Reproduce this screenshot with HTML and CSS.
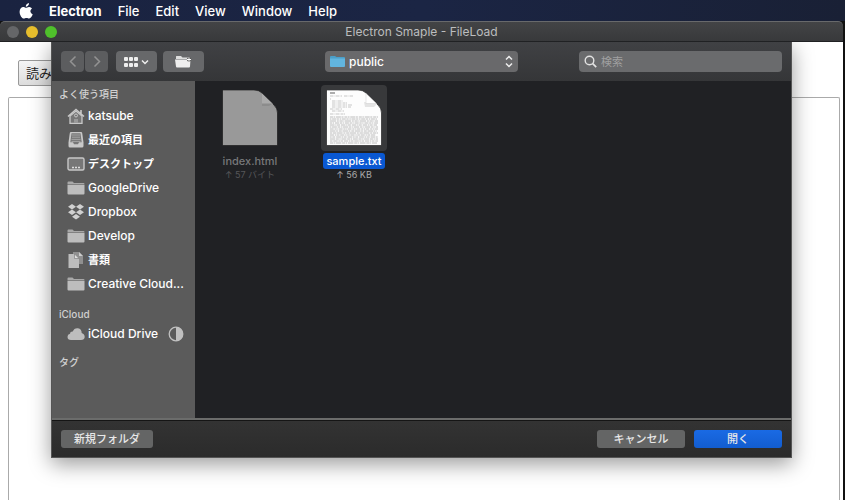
FILE: index.html
```html
<!DOCTYPE html>
<html lang="ja">
<head>
<meta charset="utf-8">
<title>Electron Smaple - FileLoad</title>
<link rel="stylesheet" href="styles.css">
</head>
<body>
<svg class="defs" aria-hidden="true">
  <symbol id="folder" viewBox="0 0 18 15">
    <path fill="#a8a8a8" d="M0.500 4V2q0-1 1-1h4l1.500 1.500H16.500q1 0 1 1V4z"/>
    <path fill="#bdbdbd" d="M0.500 4.500h17V13q0 1-1 1h-15q-1 0-1-1z"/>
  </symbol>
</svg>
<nav class="menubar" aria-label="メニューバー">
  <button class="menu" aria-label="Apple">
    <svg width="14" height="16" viewBox="0 0 14 16"><path fill="#fff" d="M10 0c.2 2-1.400 3.700-3.200 3.700C6.600 1.900 8.200.2 10 0zM7 4.800c.7 0 1.700-.9 3.200-.8 1.200.1 2.200.6 2.800 1.500-2.400 1.500-2 4.700.7 5.700-.6 1.700-2 4.300-3.500 4.300-1 0-1.500-.6-2.700-.6s-1.800.6-2.700.6C2.900 15.500.6 12 .6 8.700c0-3 1.900-4.600 3.700-4.700C5.500 4 6.300 4.800 7 4.800z"/></svg>
  </button>
  <button class="menu app">Electron</button>
  <button class="menu">File</button>
  <button class="menu">Edit</button>
  <button class="menu">View</button>
  <button class="menu">Window</button>
  <button class="menu">Help</button>
</nav>
<div class="window">
  <header class="titlebar">
    <div class="lights"><button class="light" aria-label="閉じる"></button><button class="light yellow" aria-label="しまう"></button><button class="light green" aria-label="拡大"></button></div>
    <h1>Electron Smaple - FileLoad</h1>
  </header>
  <main class="page">
    <button class="load">読み込む</button>
    <div class="output"></div>
    <section class="dialog" role="dialog" aria-label="開く">
      <div class="toolbar">
        <div class="tools">
          <div class="pair">
            <button class="tool" aria-label="戻る"><svg width="8" height="13" viewBox="0 0 8 13"><path class="dim" d="M6.500 1.500l-5 5 5 5"/></svg></button>
            <button class="tool" aria-label="進む"><svg width="8" height="13" viewBox="0 0 8 13"><path class="dim" d="M1.500 1.500l5 5-5 5"/></svg></button>
          </div>
          <button class="tool wide" aria-label="表示">
            <svg width="25" height="12" viewBox="0 0 25 12"><g fill="#eee"><rect x="0" y="1" width="4" height="4" rx="1"/><rect x="5" y="1" width="4" height="4" rx="1"/><rect x="10" y="1" width="4" height="4" rx="1"/><rect x="0" y="7" width="4" height="4" rx="1"/><rect x="5" y="7" width="4" height="4" rx="1"/><rect x="10" y="7" width="4" height="4" rx="1"/></g><path d="M18 4.500l3 3 3-3" fill="none" stroke="#eee" stroke-width="1.500"/></svg>
          </button>
          <button class="tool wide" aria-label="新規フォルダ">
            <svg width="17" height="13" viewBox="0 0 17 13"><path fill="#ddd" d="M1 4V1.500Q1 1 1.500 1H6l1.500 1.500H14V4z"/><path fill="#eee" d="M0 4.500h15.500l-.5 7q0 1-1 1H2q-1 0-1-1z"/><path d="M14 2.500v4M12 4.500h4" stroke="#555" stroke-width="2.500"/><path d="M14 2.500v4M12 4.500h4" stroke="#fff"/></svg>
          </button>
        </div>
        <div class="location">
          <svg width="15" height="12" viewBox="0 0 15 12"><path fill="#4b9fc9" d="M0 3V1q0-1 1-1h4l1.500 1H14q1 0 1 1v2z"/><path fill="#62b5df" d="M0 2.500h15V10q0 1-1 1H1q-1 0-1-1z"/></svg>
          <select aria-label="場所"><option>public</option></select>
          <svg width="8" height="13" viewBox="0 0 8 13"><path d="M1 4.500l3-3 3 3M1 8.500l3 3 3-3" fill="none" stroke="#eee" stroke-width="1.500"/></svg>
        </div>
        <label class="search">
          <svg width="13" height="13" viewBox="0 0 13 13"><circle cx="5.500" cy="5.500" r="4.300" fill="none" stroke="#e2e2e2" stroke-width="1.400"/><path d="M8.700 8.700l3.500 3.500" stroke="#e2e2e2" stroke-width="1.700"/></svg>
          <input type="search" placeholder="検索" aria-label="検索">
        </label>
      </div>
      <div class="body">
        <nav class="sidebar" aria-label="サイドバー">
          <h2>よく使う項目</h2>
          <ul>
            <li><a href="#"><svg viewBox="0 0 18 16"><path d="M3 8v7.300h12V8L9 3z" fill="#777" stroke="#c8c8c8" stroke-width="1.300"/><path d="M1 8.500l8-7 8 7M14 2v4" fill="none" stroke="#c8c8c8" stroke-width="1.600"/><path d="M7 15v-4h4v4z" fill="#999"/><circle cx="9" cy="7.500" r="1.500" fill="none" stroke="#c8c8c8"/></svg>katsube</a></li>
            <li><a href="#" class="ja"><svg viewBox="0 0 18 16"><path d="M4 0h10q1 0 1.200 1L16.500 10.500V14q0 1.500-1.500 1.500H3Q1.500 15.500 1.500 14v-3.500L2.800 1q.2-1 1.200-1z" fill="#c8c8c8"/><path d="M4.500 1.300h9l1.200 9H12l-1 2H7l-1-2H3.300z" fill="#777"/><path d="M5 3h8M5 5.200h8M4.500 7.400h9M4.500 9.400h9" stroke="#a4a4a4"/></svg>最近の項目</a></li>
            <li><a href="#" class="ja"><svg viewBox="0 0 18 16"><rect x="1" y="2" width="16" height="12" rx="1.500" fill="#777" stroke="#c8c8c8" stroke-width="1.400"/><path d="M5 11.500h2M8 11.500h2M11 11.500h2" stroke="#ddd" stroke-width="1.500"/></svg>デスクトップ</a></li>
            <li><a href="#"><svg viewBox="0 0 18 15"><use href="#folder"/></svg>GoogleDrive</a></li>
            <li><a href="#"><svg viewBox="0 0 18 16"><path fill="#d0d0d0" d="M5 0l4 2.700-4 2.700-4-2.700zM13 0l4 2.700-4 2.700-4-2.700zM5 5.500l4 2.700-4 2.700-4-2.700zM13 5.500l4 2.700-4 2.700-4-2.700zM9 10l4 2.700-4 2.700-4-2.700z"/></svg>Dropbox</a></li>
            <li><a href="#"><svg viewBox="0 0 18 15"><use href="#folder"/></svg>Develop</a></li>
            <li><a href="#" class="ja"><svg viewBox="0 0 18 16"><path fill="#909090" d="M6 0h6l4 4v8H6z"/><path fill="#ccc" d="M12 0l4 4h-4z"/><path fill="#bdbdbd" d="M1.500 2h6l4.500 4.500V16H1.500z"/><path fill="#e0e0e0" stroke="#777" stroke-width=".6" d="M7.500 2l4.500 4.500H7.500z"/></svg>書類</a></li>
            <li><a href="#"><svg viewBox="0 0 18 15"><use href="#folder"/></svg>Creative Cloud...</a></li>
          </ul>
          <h2>iCloud</h2>
          <ul>
            <li><a href="#"><svg viewBox="0 0 18 16"><path fill="#bdbdbd" d="M4 14Q.5 14 .5 10.800.5 8.500 3 7.800 3 5.500 5.700 5.600 7.200 1.800 11 2.300q3.700.7 3.700 4.700Q17.700 8 17.700 11q-.2 3-3.700 3z"/></svg>iCloud Drive</a><svg class="progress" viewBox="0 0 16 16"><circle cx="8" cy="8" r="6.800" fill="none" stroke="#c0c0c0" stroke-width="1.300"/><path fill="#c0c0c0" d="M8 1a7 7 0 0 1 0 14z"/></svg></li>
          </ul>
          <h2>タグ</h2>
        </nav>
        <div class="files">
          <button class="file off" disabled>
            <span class="thumb"><svg width="56" height="56" viewBox="0 0 56 56"><path fill="#999" stroke="#111" stroke-width=".6" d="M.5 0H32q5 0 8 3l12 12q3.500 3.500 3.500 8v32.500H.5z"/><path fill="#8c8c8c" d="M40 13h11l-4 3h-7z"/><path fill="#aaa" d="M40 3.500L50.500 13.500H40z"/></svg></span>
            <span class="name">index.html</span>
            <span class="size">↑ 57 バイト</span>
          </button>
          <button class="file selected">
            <span class="thumb"><svg width="56" height="56" viewBox="0 0 56 56"><path fill="#fdfdfd" stroke="#111" stroke-width=".6" d="M.5 0H32q5 0 8 3l12 12q3.500 3.500 3.500 8v32.500H.5z"/><g stroke="#777" stroke-width=".8" fill="none"><path d="M4 3h5" stroke-width="1.200"/><path d="M4 6h12m2 0h9M4 9h1M6 11h11M6 13h15M6 15h20M6 17h19M4 19h12M6 21h12M4 24h15" stroke-dasharray="3 .5 1 1 4 1" opacity=".5"/><g opacity=".6"><path d="M4 27h48" stroke-dasharray="3 .6 1.500 .8 5 .6 2 .9"/><path d="M4 29h47" stroke-dasharray="1.400 .7 4 .6 2.200 .8"/><path d="M4 31h48" stroke-dasharray="6 .8 2 .7 3.300 .6 1 .6"/><path d="M4 33h48" stroke-dasharray="2.300 .6 1.200 .9 4.100 .7"/><path d="M4 35h47" stroke-dasharray="4.600 .7 1 .5 3.200 .9"/><path d="M4 37h48" stroke-dasharray="1 .6 5.300 .7 2.700 .8"/><path d="M4 39h48" stroke-dasharray="3.700 .8 2.200 .6 1 .6"/><path d="M4 41h47" stroke-dasharray="5.500 .6 1.800 .9 3 .7"/><path d="M4 43h48" stroke-dasharray="2 .7 3.400 .5 6 .8"/><path d="M4 45h46" stroke-dasharray="4.200 .8 1.300 .6 2.600 .7"/><path d="M4 47h48" stroke-dasharray="1.700 .6 2.900 .9 4.800 .6"/><path d="M4 49h48" stroke-dasharray="5 .7 3.100 .6 1.200 .8"/><path d="M4 51h48" stroke-dasharray="2.500 .8 4.400 .7 1.500 .6"/><path d="M4 53h47" stroke-dasharray="3.300 .6 1 .8 5.700 .7"/></g></g><path fill="#e4e4e4" d="M38 12l13 2-3 3h-9z"/><path fill="#fff" stroke="#ccc" stroke-width=".5" d="M40 3.500L50.500 13.500H40z"/></svg></span>
            <span class="name">sample.txt</span>
            <span class="size">↑ 56 KB</span>
          </button>
        </div>
      </div>
      <footer class="actions">
        <button class="push">新規フォルダ</button>
        <span class="spacer"></span>
        <button class="push">キャンセル</button>
        <button class="push primary">開く</button>
      </footer>
    </section>
  </main>
</div>
</body>
</html>
```
FILE: styles.css
```css
* { box-sizing: border-box; }
body {
  margin: 0;
  height: 100vh;
  overflow: hidden;
  display: flex;
  flex-direction: column;
  background: #111;
  color: #fff;
  font: 12px/16px Inter, "Noto Sans CJK JP", sans-serif;
}
button, input, select { font: inherit; color: inherit; border: 0; margin: 0; padding: 0; background: none; }
svg { display: block; flex: none; }
.defs { position: absolute; width: 0; height: 0; }
h1, h2, ul { margin: 0; padding: 0; list-style: none; }

.menubar {
  flex: none;
  display: flex;
  align-items: center;
  gap: 16px;
  height: 21px;
  padding-left: 19px;
  background: linear-gradient(90deg, #1a2340, #1b2544 50%, #192035);
}
.menu { font-size: 13px; font-weight: 500; white-space: nowrap; }
.app { font-weight: 700; }

.window { flex: 1; min-height: 0; display: flex; flex-direction: column; margin-right: 2px; }
.titlebar {
  flex: none;
  display: grid;
  grid-template-columns: 1fr auto 1fr;
  align-items: center;
  height: 21px;
  padding: 0 7px;
  border-top: 1px solid #68696b;
  border-bottom: 1px solid #202123;
  border-radius: 5px 5px 0 0;
  background: linear-gradient(#434446, #38393b);
}
.lights { display: flex; gap: 7px; }
.light { width: 12px; height: 12px; border-radius: 50%; background: #656668; }
.yellow { background: #e6bd2c; }
.green { background: #4fc02b; }
h1 { font-size: 12px; font-weight: 400; color: #bcbdbe; }

.page { position: relative; flex: 1; min-height: 0; display: flex; flex-direction: column; align-items: flex-start; gap: 11px; padding: 18px 3px 0 8px; background: #fff; overflow: hidden; }
.load { flex: none; height: 26px; margin-left: 10px; padding: 0 7px; border: 1px solid #999; border-radius: 2px; background: linear-gradient(#f5f5f5, #ddd); color: #222; font-size: 13px; }
.output { flex: 1; align-self: stretch; border: 1px solid #aaa; border-bottom: 0; border-radius: 2px 2px 0 0; }

.dialog {
  position: absolute;
  inset: 0 51px 42px;
  display: flex;
  flex-direction: column;
  border: 1px solid #555;
  border-top: 0;
  background: #202124;
  box-shadow: 0 6px 20px rgba(0, 0, 0, .4);
}
.toolbar { flex: none; display: grid; grid-template-columns: 1fr 193px 1fr; align-items: center; height: 39px; padding: 0 9px; background: linear-gradient(#404144, #353638); }
.tools { display: flex; gap: 6px; }
.pair { display: flex; gap: 1px; margin-right: 2px; }
.tool { display: flex; align-items: center; justify-content: center; width: 23px; height: 21px; border-radius: 4px; background: #5c5d5f; }
.tool.wide { width: 41px; background: #67686a; }
.dim { fill: none; stroke: #939393; stroke-width: 1.5; }
.location { display: flex; align-items: center; gap: 4px; height: 21px; padding: 0 5px; border-radius: 4px; background: #69696b; font-weight: 500; }
select { flex: 1; min-width: 0; appearance: none; outline: 0; }
.search { justify-self: end; display: flex; align-items: center; gap: 4px; width: 203px; height: 21px; padding: 0 5px; border-radius: 4px; background: #6a6b6d; }
.search input { flex: 1; min-width: 0; outline: 0; font-size: 11px; }
.search input::placeholder { color: #a0a0a0; }

.body { flex: 1; min-height: 0; display: flex; border-bottom: 2px solid #6b6c6b; }
.sidebar { flex: none; width: 143px; padding: 5px 11px 0 7px; background: #5b5b5b; overflow: hidden; }
h2 { font-size: 10px; line-height: 16px; font-weight: 500; color: #d0d0d0; }
.sidebar ul { margin: 2px 0 10px; }
.sidebar h2 ~ h2 + ul { margin: 0 0 8px; }
li { display: flex; align-items: center; justify-content: space-between; height: 24px; }
a { display: flex; align-items: center; gap: 3px; margin-left: 8px; color: #fff; font-weight: 500; text-decoration: none; white-space: nowrap; }
.ja { font-size: 11px; font-weight: 700; }
a svg { width: 18px; height: 16px; }
.progress { width: 16px; height: 16px; }

.files { flex: 1; display: flex; align-items: flex-start; gap: 4px; padding: 4px 5px; }
.file { display: flex; flex-direction: column; align-items: center; width: 100px; }
.thumb { display: flex; padding: 5px; border-radius: 4px; }
.name { margin-top: 2px; padding: 0 3px; border-radius: 3px; font-size: 11px; font-weight: 500; }
.size { font-size: 9px; line-height: 12px; color: #aaa; }
.off .name { color: #77787a; }
.off .size { color: #56575a; }
.selected .thumb { background: #38393b; }
.selected .name { background: #0a58d2; }

.actions { flex: none; display: flex; align-items: center; gap: 9px; height: 37px; padding: 0 9px; border-top: 1px solid #151515; background: linear-gradient(#333, #2b2b2b); }
.spacer { flex: 1; }
.push { min-width: 88px; height: 18px; padding: 0 12px; border-radius: 3px; background: #646565; color: #e8e8e8; font-size: 11px; font-weight: 500; line-height: 18px; }
.push:first-child { min-width: 92px; padding: 0; }
.primary { background: linear-gradient(#1a6ae4, #125dd0); }
```
